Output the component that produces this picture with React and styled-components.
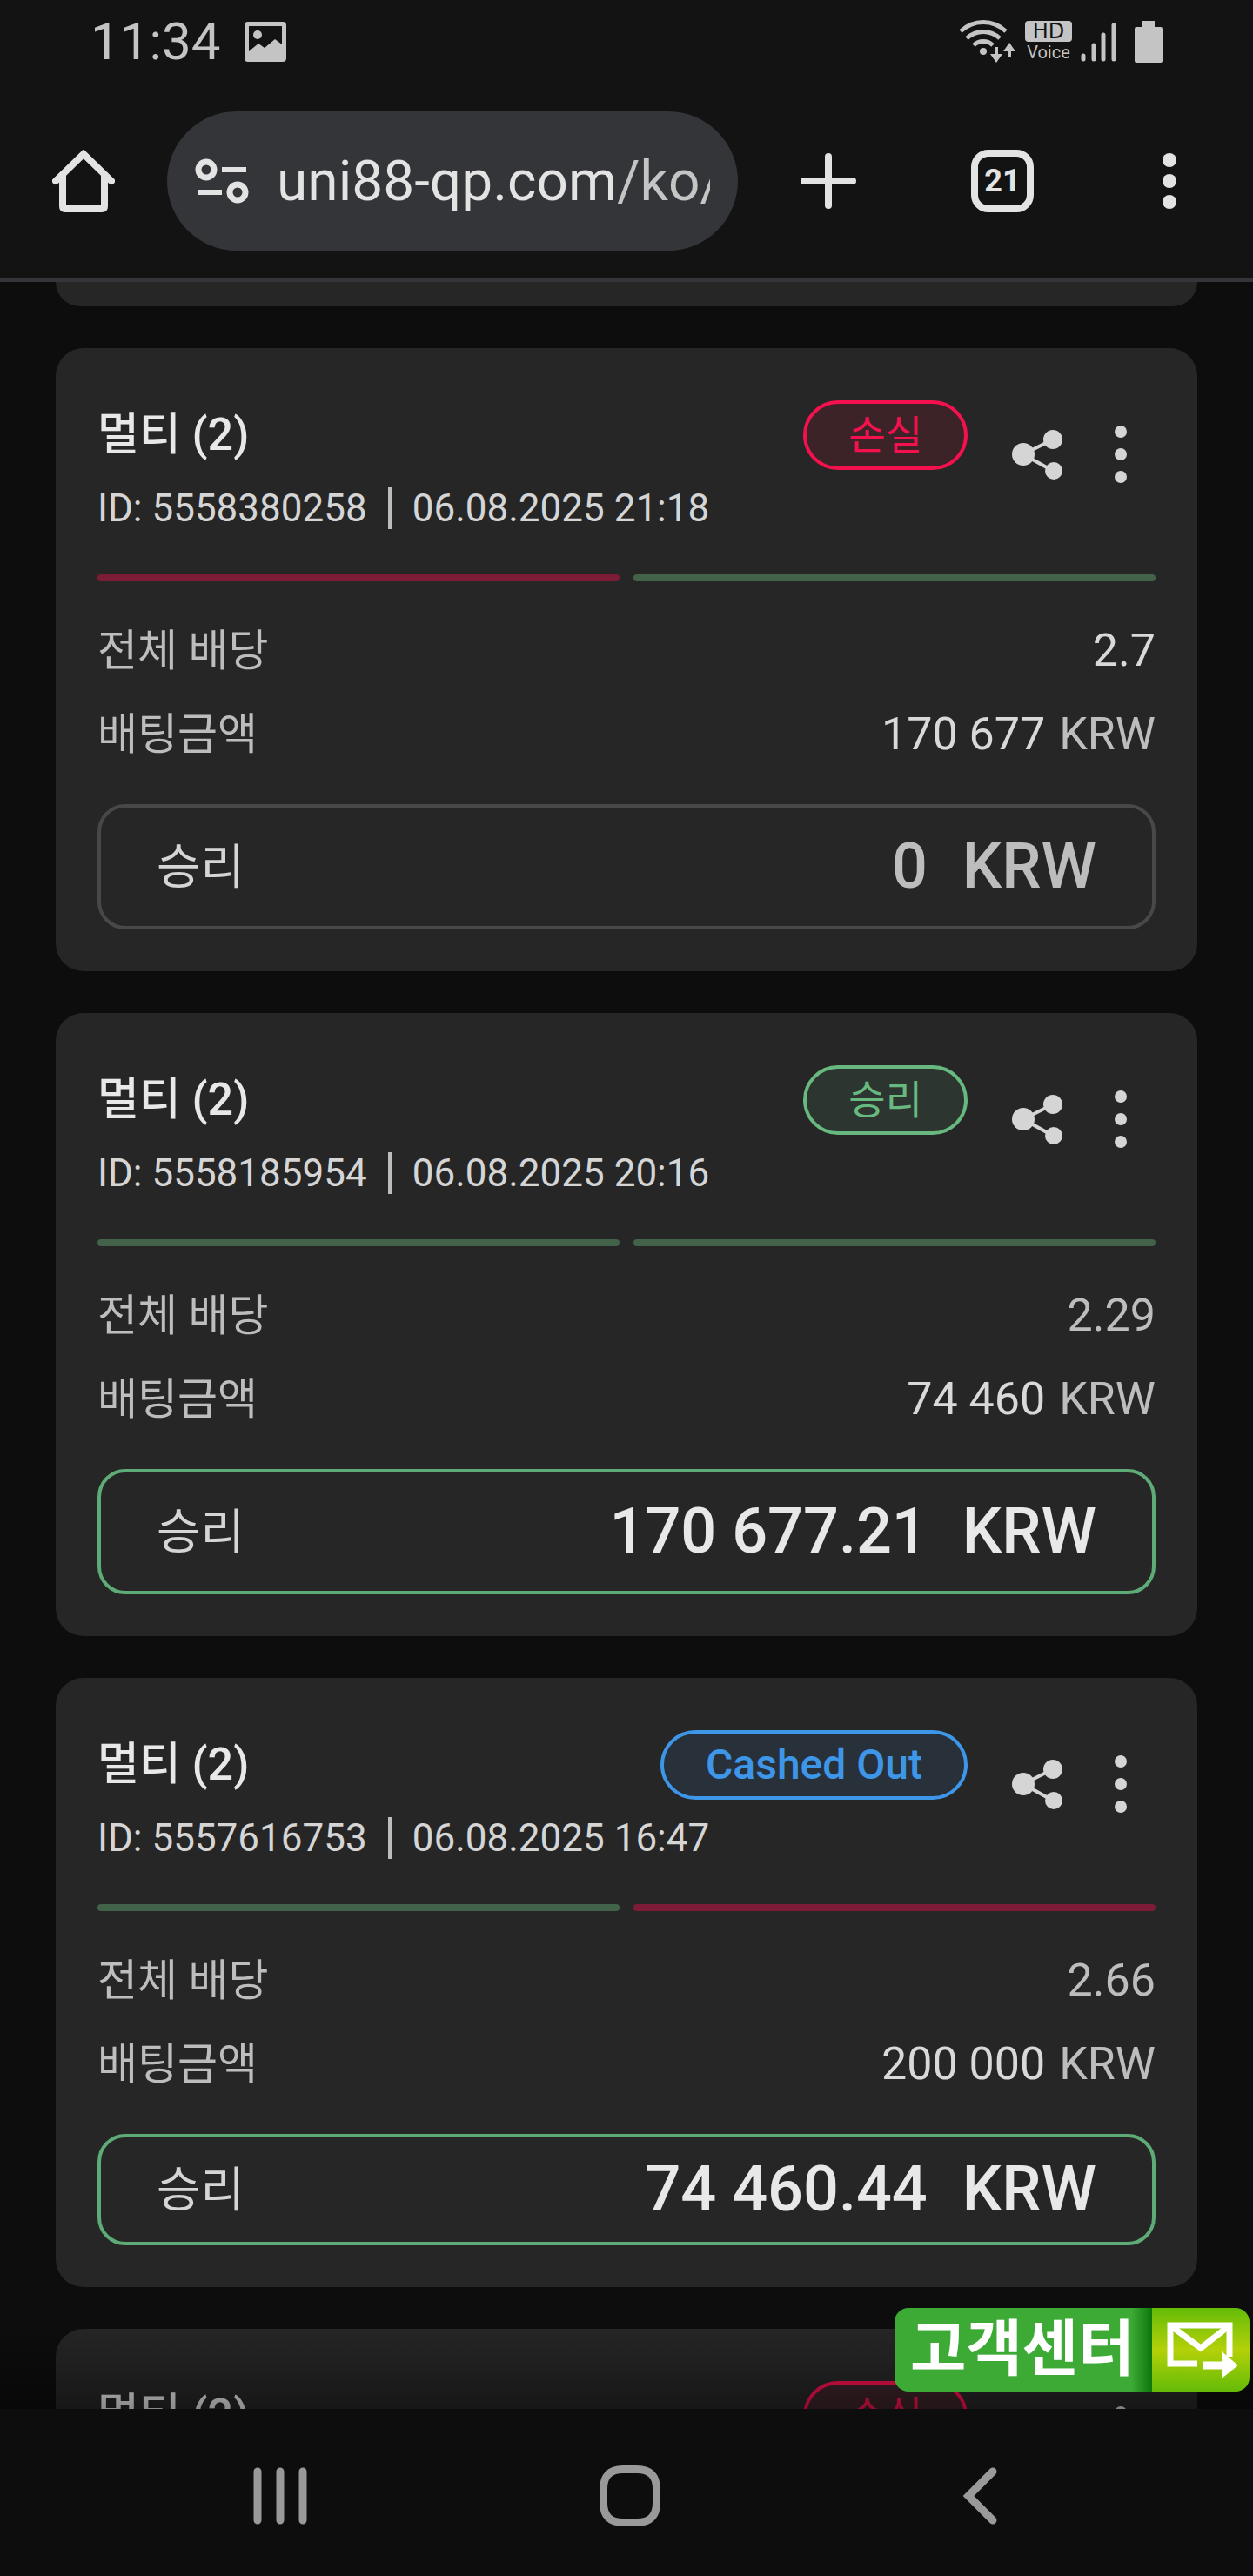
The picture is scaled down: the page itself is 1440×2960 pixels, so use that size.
import React from 'react'
import styled, { createGlobalStyle } from 'styled-components'


const LOSS = '#f5114e'
const WIN = '#67b97f'
const CASHED = '#3e96e8'

const BETS = [
    { id: '5558380258', date: '06.08.2025 21:18', status: 'loss', legs: ['loss', 'win'], odds: '2.7', brightOdds: true, stake: '170 677', payout: '0' },
    { id: '5558185954', date: '06.08.2025 20:16', status: 'win', legs: ['win', 'win'], odds: '2.29', stake: '74 460', payout: '170 677.21' },
    { id: '5557616753', date: '06.08.2025 16:47', status: 'cashed', legs: ['win', 'loss'], odds: '2.66', stake: '200 000', payout: '74 460.44', compact: true },
]

const STATUS = {
    loss: { label: '손실', color: LOSS, fill: '#3b2328', korean: true },
    win: { label: '승리', color: WIN, fill: '#2c352f', korean: true },
    cashed: { label: 'Cashed Out', color: CASHED, fill: '#28313a' },
}

const App = () => {

    return (<Screen>
                <GlobalStyle />
                <StatusBar />
                <BrowserBar />
                <Page>
                    <CardTail />
                    {BETS.map(bet => <BetCard key={bet.id} bet={bet} />)}
                    <Card>
                        <BetHeader status="loss" />
                    </Card>
                    <PageShade />
                    <SupportButton type="button">
                        <SupportText>고객센터</SupportText>
                        <SupportMail><MailIcon /></SupportMail>
                    </SupportButton>
                </Page>
                <SystemNav />
            </Screen>)
}


export default App


const StatusBar = () => (
    <StatusRow>
        <StatusGroup>
            <Clock>11:34</Clock>
            <svg width="48" height="46" viewBox="0 0 48 46" fill="#c4c4c4">
                <path fillRule="evenodd" d="M4 0h40a4 4 0 0 1 4 4v38a4 4 0 0 1-4 4H4a4 4 0 0 1-4-4V4a4 4 0 0 1 4-4zM5 5v29l11-9 7 5 12-10 8 6V5z" />
                <circle cx="15" cy="15" r="5" />
            </svg>
        </StatusGroup>
        <StatusIcons>
            <svg width="66" height="50" viewBox="0 0 66 50" fill="none" stroke="#c4c4c4" strokeWidth="5">
                <path d="M2 13C17-1 39-1 54 13" />
                <path d="M9 21c11-10 27-10 38 0" />
                <path d="M17 29c6-6 16-6 22 0" />
                <circle cx="28" cy="36" r="4" fill="#c4c4c4" stroke="none" />
                <path d="M43 31v12M58 43V33" strokeWidth="4" />
                <path d="M36 39h14l-7 10zM51 36h14l-7-10z" fill="#c4c4c4" stroke="none" />
            </svg>
            <HdVoice>
                <HdBadge>HD</HdBadge>
                <VoiceText>Voice</VoiceText>
            </HdVoice>
            <svg width="42" height="48" viewBox="0 0 42 48" stroke="#c4c4c4" strokeWidth="5" strokeLinecap="round">
                <path d="M3 40v4M15 28v16M26 16v28M38 5v39" />
            </svg>
            <svg width="32" height="48" viewBox="0 0 32 48" fill="#c4c4c4">
                <path d="M8 0h15v7h7a2 2 0 0 1 2 2v37a2 2 0 0 1-2 2H2a2 2 0 0 1-2-2V9a2 2 0 0 1 2-2h6z" />
            </svg>
        </StatusIcons>
    </StatusRow>
)

const BrowserBar = () => (
    <Toolbar>
        <BarButton type="button" aria-label="Home" $width={192}>
            <svg width="72" height="72" viewBox="0 0 72 72" fill="none" stroke="#e3e3e3" strokeWidth="8">
                <path d="M4 36 36 5l32 31" strokeLinecap="round" />
                <path d="M12 29v36q0 3 3 3h42q3 0 3-3V29" />
            </svg>
        </BarButton>
        <AddressBar>
            <svg width="62" height="52" viewBox="0 0 62 52" fill="none" stroke="#e3e3e3" strokeWidth="7">
                <circle cx="13" cy="13" r="9" />
                <circle cx="49" cy="39" r="9" />
                <path d="M31 13h28M3 39h28" strokeWidth="6" />
            </svg>
            <AddressInput aria-label="Address" defaultValue="uni88-qp.com/ko/" />
        </AddressBar>
        <BarButton type="button" aria-label="New tab" $width={200}>
            <svg width="64" height="64" viewBox="0 0 64 64" stroke="#e3e3e3" strokeWidth="8" strokeLinecap="round">
                <path d="M32 4v56M4 32h56" />
            </svg>
        </BarButton>
        <BarButton type="button" aria-label="Tabs" $width={200}>
            <TabCount>21</TabCount>
        </BarButton>
        <BarButton type="button" aria-label="Browser menu" $width={184}>
            <svg width="16" height="64" viewBox="0 0 16 64" fill="#e3e3e3">
                <circle cx="8" cy="8" r="8" />
                <circle cx="8" cy="32" r="8" />
                <circle cx="8" cy="56" r="8" />
            </svg>
        </BarButton>
    </Toolbar>
)

const BetHeader = ({ status, children }) => {
    const { label, color, fill, korean } = STATUS[status]

    return (<CardHeader>
                <CardInfo>
                    <TitleRow>
                        <Title>멀티 (2)</Title>
                        <Badge $color={color} $fill={fill} $korean={korean}>{label}</Badge>
                    </TitleRow>
                    {children}
                </CardInfo>
                <Actions>
                    <IconButton type="button" aria-label="Share">
                        <svg width="80" height="80" viewBox="0 0 80 80" fill="#d5d5d5">
                            <path d="M58 23 24 40l34 19" fill="none" stroke="#d5d5d5" strokeWidth="4" />
                            <circle cx="24" cy="40" r="13" />
                            <circle cx="58" cy="23" r="11" />
                            <circle cx="59" cy="59" r="10" />
                        </svg>
                    </IconButton>
                    <IconButton type="button" aria-label="More">
                        <svg width="80" height="80" viewBox="0 0 80 80" fill="#d5d5d5">
                            <circle cx="40" cy="14" r="7" />
                            <circle cx="40" cy="40" r="7" />
                            <circle cx="40" cy="66" r="7" />
                        </svg>
                    </IconButton>
                </Actions>
            </CardHeader>)
}

const BetCard = ({ bet }) => {
    const won = bet.payout !== '0'

    return (<Card>
                <BetHeader status={bet.status}>
                    <Meta>
                        <span>ID: {bet.id}</span>
                        <MetaDivider />
                        <span>{bet.date}</span>
                    </Meta>
                </BetHeader>
                <Legs>
                    {bet.legs.map((leg, i) => <Leg key={i} $result={leg} />)}
                </Legs>
                <Details>
                    <DetailRow>
                        <DetailLabel>전체 배당</DetailLabel>
                        <DetailValue $bright={bet.brightOdds}>{bet.odds}</DetailValue>
                    </DetailRow>
                    <DetailRow>
                        <DetailLabel>배팅금액</DetailLabel>
                        <DetailValue $bright>{bet.stake}<Currency>KRW</Currency></DetailValue>
                    </DetailRow>
                </Details>
                <Payout $won={won} $compact={bet.compact}>
                    <PayoutLabel>승리</PayoutLabel>
                    <PayoutValue $won={won}>
                        <span>{bet.payout}</span>
                        <span>KRW</span>
                    </PayoutValue>
                </Payout>
            </Card>)
}

const MailIcon = () => (
    <svg width="84" height="72" viewBox="0 0 84 72" fill="none" stroke="#fff" strokeWidth="7">
        <path d="M38 52H7V8h68v36" />
        <path d="M8 9l34 25L74 9" />
        <path d="M44 54h24" strokeWidth="9" />
        <path d="M66 38l19 16-19 15z" fill="#fff" stroke="none" />
    </svg>
)

const SystemNav = () => (
    <NavBar>
        <NavButton type="button" aria-label="Recents">
            <svg width="62" height="66" viewBox="0 0 62 66" stroke="#999" strokeWidth="9" strokeLinecap="round">
                <path d="M5 5v56M31 5v56M57 5v56" />
            </svg>
        </NavButton>
        <NavButton type="button" aria-label="Home screen">
            <svg width="70" height="70" viewBox="0 0 70 70" fill="none" stroke="#999" strokeWidth="9">
                <path d="M27 4.500h16q22.500 0 22.500 22.500v16q0 22.500-22.500 22.500h-16q-22.500 0-22.500-22.500v-16q0-22.500 22.500-22.500z" />
            </svg>
        </NavButton>
        <NavButton type="button" aria-label="Back">
            <svg width="40" height="66" viewBox="0 0 40 66" fill="none" stroke="#999" strokeWidth="9" strokeLinecap="round">
                <path d="M35 5 7 33l28 28" />
            </svg>
        </NavButton>
    </NavBar>
)



const GlobalStyle = createGlobalStyle`
    * {
        box-sizing: border-box;
    }

    body {
        margin: 0;
        background: #0d0d0d;
    }

    svg {
        display: block;
        flex-shrink: 0;
    }

    button {
        padding: 0;
        border: none;
        background: none;
        font-family: inherit;
        cursor: pointer;
    }
`

const Screen = styled.div`
    display: flex;
    flex-direction: column;
    height: 100vh;
    font-family: Roboto, "Noto Sans CJK KR", sans-serif;
    color: #d5d5d5;
`

const StatusRow = styled.div`
    display: flex;
    justify-content: space-between;
    align-items: center;
    height: 96px;
    flex-shrink: 0;
    padding: 0 104px;
    background: #131313;
`
const StatusGroup = styled.div`
    display: flex;
    align-items: center;
    gap: 28px;
`
const Clock = styled.span`
    font-size: 60px;
    line-height: 96px;
    color: #c4c4c4;
`
const StatusIcons = styled.div`
    display: flex;
    align-items: center;
    gap: 10px;

    svg:last-child {
        margin-left: 10px;
    }
`
const HdVoice = styled.div`
    display: flex;
    flex-direction: column;
    align-items: center;
    width: 54px;
`
const HdBadge = styled.span`
    width: 100%;
    border-radius: 4px;
    background: #c4c4c4;
    color: #131313;
    font-family: "DejaVu Sans", sans-serif;
    font-size: 24px;
    line-height: 24px;
    text-align: center;
`
const VoiceText = styled.span`
    font-size: 20px;
    line-height: 24px;
    color: #c4c4c4;
`

const Toolbar = styled.header`
    display: flex;
    align-items: center;
    height: 228px;
    flex-shrink: 0;
    padding-right: 4px;
    background: #131313;
    border-bottom: 4px solid #343538;
`
const BarButton = styled.button`
    display: flex;
    justify-content: center;
    align-items: center;
    width: ${p => p.$width}px;
    height: 96px;
    flex-shrink: 0;
`
const AddressBar = styled.label`
    display: flex;
    align-items: center;
    gap: 32px;
    flex: 1;
    min-width: 0;
    height: 160px;
    margin-right: 4px;
    padding: 0 32px;
    border-radius: 80px;
    background: #343538;
`
// the path after the host is drawn a shade darker
const AddressInput = styled.input`
    flex: 1;
    min-width: 0;
    height: 96px;
    padding: 0;
    border: none;
    outline: none;
    background: linear-gradient(90deg, #e3e3e3 388px, #c4c6c6 388px);
    background-clip: text;
    color: transparent;
    font-family: inherit;
    font-size: 64px;
`
const TabCount = styled.span`
    width: 72px;
    height: 72px;
    border: 8px solid #e3e3e3;
    border-radius: 20px;
    color: #e3e3e3;
    font-size: 36px;
    font-weight: 700;
    line-height: 56px;
    text-align: center;
`

const Page = styled.main`
    position: relative;
    display: flex;
    flex-direction: column;
    gap: 48px;
    flex: 1;
    min-height: 0;
    overflow: hidden;
    padding: 0 64px;
    background: #0d0d0d;
`
const CardTail = styled.div`
    height: 28px;
    flex-shrink: 0;
    border-radius: 0 0 32px 32px;
    background: #262626;
`
const Card = styled.article`
    flex-shrink: 0;
    padding: 60px 48px 48px;
    border-radius: 32px;
    background: #262626;
`
const CardHeader = styled.div`
    display: flex;
    gap: 40px;
`
const CardInfo = styled.div`
    display: flex;
    flex-direction: column;
    gap: 20px;
    flex: 1;
`
const TitleRow = styled.div`
    display: flex;
    justify-content: space-between;
    align-items: center;
    height: 80px;
`
const Title = styled.h2`
    margin: 0;
    color: #e8e8e8;
    font-size: 52px;
    font-weight: 500;
    line-height: 64px;
`
const Badge = styled.span`
    height: 80px;
    padding: 0 48px;
    border: 4px solid ${p => p.$color};
    border-radius: 40px;
    background: ${p => p.$fill};
    color: ${p => p.$color};
    font-size: ${p => p.$korean ? '46px' : '48px'};
    font-weight: ${p => p.$korean ? 400 : 500};
    line-height: 72px;
`
const Meta = styled.div`
    display: flex;
    align-items: center;
    gap: 24px;
    font-size: 44px;
    line-height: 48px;
`
const MetaDivider = styled.span`
    width: 4px;
    height: 48px;
    background: #bdbdbd;
`
const Actions = styled.div`
    display: flex;
    gap: 16px;
    padding-top: 22px;
`
const IconButton = styled.button`
    width: 80px;
    height: 80px;
`
const Legs = styled.div`
    display: flex;
    gap: 16px;
    margin-top: 52px;
`
const Leg = styled.div`
    flex: 1;
    height: 8px;
    border-radius: 4px;
    background: ${p => p.$result === 'win' ? '#42634a' : '#7d1c36'};
`
const Details = styled.dl`
    display: flex;
    flex-direction: column;
    gap: 32px;
    margin: 48px 0;
`
const DetailRow = styled.div`
    display: flex;
    justify-content: space-between;
    align-items: baseline;
    font-size: 52px;
    line-height: 64px;
`
const DetailLabel = styled.dt`
    color: #bdbdbd;
    font-size: 50px;
`
const DetailValue = styled.dd`
    margin: 0;
    color: ${p => p.$bright ? '#d9d9d9' : '#bdbdbd'};
`
const Currency = styled.span`
    margin-left: 16px;
    color: #bdbdbd;
`
const Payout = styled.div`
    display: flex;
    justify-content: space-between;
    align-items: center;
    height: ${p => p.$compact ? '128px' : '144px'};
    padding: 0 64px;
    border: 4px solid ${p => p.$won ? '#5fab77' : '#484848'};
    border-radius: 32px;
`
const PayoutLabel = styled.span`
    font-size: 55px;
    line-height: 72px;
`
const PayoutValue = styled.span`
    display: flex;
    gap: 40px;
    color: ${p => p.$won ? '#e8e8e8' : '#bdbdbd'};
    font-size: 72px;
    font-weight: 500;
    line-height: 72px;
`

const PageShade = styled.div`
    position: absolute;
    left: 0;
    right: 0;
    bottom: 0;
    height: 96px;
    background: linear-gradient(transparent, rgba(0, 0, 0, 0.4));
    pointer-events: none;
`
const SupportButton = styled.button`
    position: absolute;
    right: 4px;
    bottom: 20px;
    display: flex;
    height: 96px;
    border-radius: 16px;
    overflow: hidden;
`
const SupportText = styled.span`
    width: 296px;
    padding-left: 18px;
    background: linear-gradient(90deg, transparent 92%, #0e760b), #3caa35;
    color: #fff;
    font-size: 70px;
    font-weight: 700;
    line-height: 96px;
    text-align: left;
`
const SupportMail = styled.span`
    display: flex;
    justify-content: center;
    align-items: center;
    width: 112px;
    height: 96px;
    background: linear-gradient(#64bb07, #b4d108 50%, #64bb07);
`

const NavBar = styled.nav`
    display: flex;
    align-items: center;
    height: 192px;
    flex-shrink: 0;
    padding: 8px 113px 0 121px;
    background: #0d0d0d;
`
const NavButton = styled.button`
    display: flex;
    justify-content: center;
    align-items: center;
    flex: 1;
    height: 96px;
`
